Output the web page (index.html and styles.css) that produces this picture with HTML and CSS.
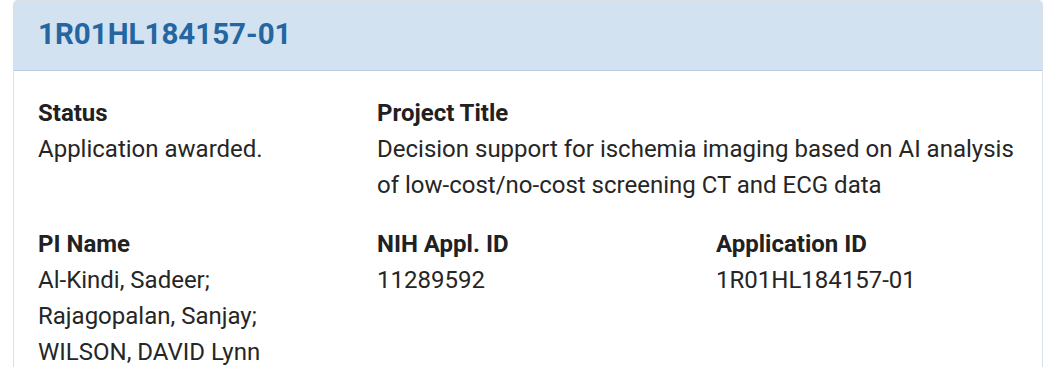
FILE: index.html
```html
<!DOCTYPE html>
<html>
<head>
<meta charset="utf-8">
<link rel="stylesheet" href="styles.css">
</head>
<body>
<div class="card">
  <div class="card-header">
    <h2 class="card-title">1R01HL184157-01</h2>
  </div>
  <div class="card-body">
    <div class="field">
      <div class="label">Status</div>
      <div class="value">Application awarded.</div>
    </div>
    <div class="field span2">
      <div class="label">Project Title</div>
      <div class="value">Decision support for ischemia imaging based on AI analysis of low-cost/no-cost screening CT and ECG data</div>
    </div>
    <div class="field">
      <div class="label">PI Name</div>
      <div class="value">Al-Kindi, Sadeer;<br>Rajagopalan, Sanjay;<br>WILSON, DAVID Lynn</div>
    </div>
    <div class="field">
      <div class="label">NIH Appl. ID</div>
      <div class="value">11289592</div>
    </div>
    <div class="field">
      <div class="label">Application ID</div>
      <div class="value">1R01HL184157-01</div>
    </div>
  </div>
</div>
</body>
</html>
```

FILE: styles.css
```css
html, body {
  margin: 0;
  padding: 0;
  background: #ffffff;
}
body {
  font-family: Roboto, "Liberation Sans", sans-serif;
  color: #212121;
  padding: 0 8px 0 13px;
}
.card {
  border: 1px solid #d9e0e8;
  border-radius: 4px;
  background: #fff;
  overflow: hidden;
}
.card-header {
  background: #d3e2f1;
  border-bottom: 1px solid #b9cde2;
  padding: 15px 24px 17px;
}
.card-title {
  margin: 0;
  font-size: 29.5px;
  line-height: 37px;
  font-weight: 700;
  color: #2566a1;
}
.card-body {
  padding: 24px 17px 24px 24px;
  display: grid;
  grid-template-columns: repeat(3, 1fr);
  column-gap: 30px;
  row-gap: 23px;
}
.span2 {
  grid-column: span 2;
}
.label {
  font-size: 24px;
  line-height: 36px;
  font-weight: 700;
  color: #212121;
}
.value {
  font-size: 24px;
  line-height: 36px;
  color: #262626;
}
```
